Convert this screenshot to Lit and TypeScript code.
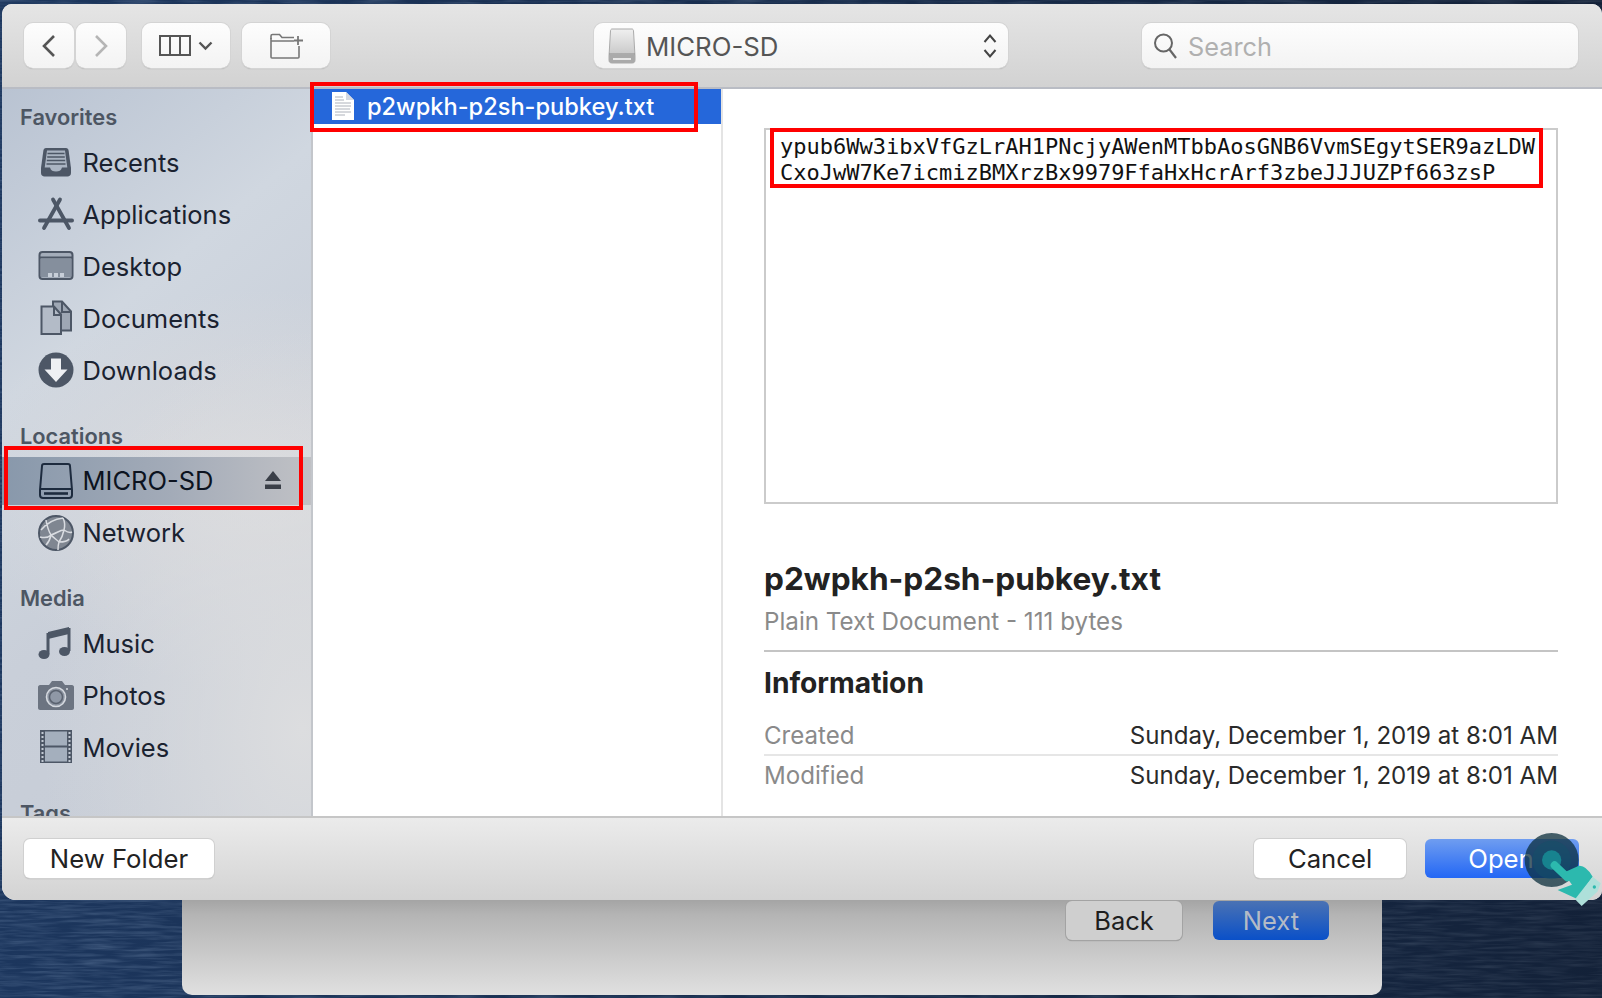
import { LitElement, html, css, svg } from "lit";
import { customElement } from "lit/decorators.js";

const c = "#4d5766";
const icons: Record<string, unknown> = {
  recents: svg`<path d="M8 4h20c1.500 0 2.400 1 2.600 2.400L33 24v5c0 2-1.500 3.500-3.500 3.500h-23C4.500 32.500 3 31 3 29v-5l2.400-17.600C5.600 5 6.500 4 8 4z" fill="${c}"/><path d="M9 6.500h18l2.300 17H24c-.8 3-3 4-6 4s-5.200-1-6-4H6.700z" fill="#aab4c2"/><path d="M9.500 9.500h17M9.200 13h17.600M8.800 16.500h18.400M8.500 20h19" stroke="${c}" stroke-width="1.700"/>`,
  apps: svg`<g stroke="${c}" stroke-linecap="round" fill="none"><path d="M22 3.500 6 32" stroke-width="3.800"/><path d="M15 3.500 31 32" stroke-width="3.800"/><path d="M2 24.500h32" stroke-width="4"/></g>`,
  desktop: svg`<rect x="1.500" y="4" width="33" height="27" rx="3" fill="#a4adba" stroke="${c}" stroke-width="2"/><path d="M2 9.500h32" stroke="${c}" stroke-width="2"/><path d="M3 10.500h30V29H3z" fill="#858f9d"/><path d="M10 25h4v4h-4zM16 25h4v4h-4zM22 25h4v4h-4z" fill="#c7ced8"/>`,
  docs: svg`<path d="M15 1.500h9l9 10v19H15z" fill="#9ea7b4" stroke="${c}" stroke-width="2"/><path d="M3.500 6.500H16l7 8v19.500H3.500z" fill="#b3bbc7" stroke="${c}" stroke-width="2"/><path d="M16 7v8h7M24 2v10h9" fill="none" stroke="${c}" stroke-width="2"/>`,
  down: svg`<circle cx="18" cy="18" r="17.500" fill="${c}"/><path d="M13 6.500h10v11h6.500L18 30 6.500 17.500H13z" fill="#eef0f3"/>`,
  sd: svg`<path d="M6 1h24c1 0 2 1 2 2l2 24v5c0 2-1 3-3 3H5c-2 0-3-1-3-3v-5L4 3c0-1 1-2 2-2z" fill="none" stroke="#1d2b3e" stroke-width="2"/><path d="M2 26h32" stroke="#1d2b3e" stroke-width="2"/><path d="M6 30.500h24" stroke="#1d2b3e" stroke-width="2.600"/>`,
  net: svg`<circle cx="18" cy="18" r="17" fill="#7f8691" stroke="${c}" stroke-width="2"/><g fill="none" stroke="#d9dce1" stroke-width="1.500"><path d="M3 15C9 8 15 4 25 3M8 5c1 6 2 10 5 15M13 20c6-2 9-5 13-5M26 15c1-4 1-8-1-12M26 15c3 2 6 3 8 2M13 20c-3 3-7 3-11 2M13 20c3 3 6 5 8 7M26 15c-1 5-3 9-5 12M21 27c3 0 8 0 10-3M21 27c-1 3-1 5-1 8M13 20c-1 5-3 8-5 10"/></g>`,
  music: svg`<path d="M10 7 31 2v7L10 14z" fill="${c}"/><path d="M10 8v21M31 3v23" stroke="${c}" stroke-width="3"/><ellipse cx="6" cy="29.500" rx="5.500" ry="4.500" fill="${c}"/><ellipse cx="26.500" cy="26.500" rx="5.500" ry="4.500" fill="${c}"/>`,
  photos: svg`<path d="M2 8h9l3-4h10l3 4h7c1 0 2 1 2 2v21c0 1-1 2-2 2H2c-1 0-2-1-2-2V10c0-1 1-2 2-2z" fill="#6c7481"/><circle cx="18" cy="20" r="9.500" fill="#8b93a0" stroke="#d5d9df" stroke-width="1.600"/><circle cx="18" cy="20" r="6.500" fill="#8f98a6" stroke="#5a626f" stroke-width="1.500"/><circle cx="29" cy="12" r="1" fill="#d5d9df"/>`,
  movies: svg`<rect x="2" y="1" width="32" height="33" fill="#4d5766"/><rect x="7" y="2.500" width="22" height="14" fill="#a4afbd"/><rect x="7" y="18.500" width="22" height="14" fill="#a4afbd"/><g fill="#c2c9d3">${[3, 7, 11, 15, 19, 23, 27, 31].map(
    (y) => svg`<rect x="3.500" y="${y}" width="2" height="2"/><rect x="30.500" y="${y}" width="2" height="2"/>`
  )}</g>`,
};

const sections = [
  { label: "Favorites", items: [["Recents", "recents"], ["Applications", "apps"], ["Desktop", "desktop"], ["Documents", "docs"], ["Downloads", "down"]] },
  { label: "Locations", items: [["MICRO-SD", "sd"], ["Network", "net"]] },
  { label: "Media", items: [["Music", "music"], ["Photos", "photos"], ["Movies", "movies"]] },
  { label: "Tags", items: [] },
];

@customElement("app-root")
export class AppRoot extends LitElement {
  static styles = css`
    :host {
      display: block;
      position: relative;
      width: 1602px;
      height: 998px;
      overflow: hidden;
      font-family: Inter, "Liberation Sans", sans-serif;
      background: #1c3050;
    }
    .water { position: absolute; inset: 0; width: 100%; height: 100%; }
    .sheet {
      position: absolute;
      left: 182px;
      top: 880px;
      width: 1200px;
      height: 115px;
      box-sizing: border-box;
      border-radius: 0 0 10px 10px;
      background: linear-gradient(#8f8f8f 0, #b4b4b4 30%, #e0e0e0 100%);
      display: flex;
      justify-content: flex-end;
      align-items: flex-start;
      gap: 31px;
      padding: 21px 53px 0 0;
    }
    .sheet button {
      height: 39px;
      border-radius: 6px;
      font: inherit;
      font-size: 25.500px;
      padding: 0;
      border: 0;
    }
    .back { width: 116px; background: #cfcfcf; color: #1e1e1e; box-shadow: 0 0 0 1px #a3a3a3, 0 1px 1px #888; }
    .next { width: 116px; height: 40px; background: linear-gradient(#4a72b4, #0a50c8); color: #b4bbc6; }
    .win {
      position: absolute;
      left: 2px;
      top: 4px;
      width: 1600px;
      height: 896px;
      border-radius: 10px 10px 10px 14px;
      overflow: hidden;
      display: flex;
      flex-direction: column;
      background: #fff;
    }
    .toolbar {
      height: 85px;
      box-sizing: border-box;
      flex: none;
      display: flex;
      align-items: flex-start;
      padding: 19px 22px 0;
      background: linear-gradient(#e5e5e5, #d2d2d2);
      border-bottom: 2px solid #b9bcc4;
    }
    .tb {
      height: 45px;
      box-sizing: border-box;
      background: linear-gradient(#fdfdfd, #f3f3f3);
      border-radius: 9px;
      box-shadow: 0 0 0 1px #d4d4d4, 0 1px 1px #9a9a9a;
      display: flex;
      align-items: center;
      justify-content: center;
      flex: none;
    }
    .nav { width: 50px; }
    .fwd { margin-left: 2px; }
    .view { width: 88px; margin-left: 16px; gap: 7px; }
    .folder { width: 88px; margin-left: 12px; }
    .popup {
      width: 414px;
      margin-left: 264px;
      justify-content: flex-start;
      padding: 0 11px 0 14px;
      gap: 10px;
      font-size: 25.800px;
      color: #555;
    }
    .popup .sp { flex: 1; }
    .tb span { padding-top: 2px; }
    .search {
      width: 436px;
      margin-left: 134px;
      justify-content: flex-start;
      padding: 0 0 0 11px;
      gap: 9px;
      font-size: 25.300px;
      color: #b0b0b0;
    }
    .body { flex: 1; min-height: 0; display: flex; }
    .side {
      width: 311px;
      flex: none;
      overflow: hidden;
      box-sizing: border-box;
      padding-top: 9px;
      border-right: 2px solid #c3c6cb;
      background:
        radial-gradient(ellipse 260px 400px at 300px 640px, #dcdddf 0, rgba(220, 221, 223, 0) 100%),
        radial-gradient(ellipse 300px 200px at 260px 400px, #dcdcde 0, rgba(220, 220, 222, 0) 100%),
        linear-gradient(140deg, #b9c3d2 0, #d0d7e0 32%, #c9cfd9 60%, #c6ccd6 100%);
    }
    .label {
      height: 38px;
      line-height: 38px;
      padding-left: 18px;
      font-size: 21.800px;
      font-weight: 600;
      color: #4d5663;
      margin-bottom: -2px;
      flex: none;
    }
    .sec { margin-bottom: 22.500px; display: flex; flex-direction: column; gap: 4px; }
    .row {
      height: 48px;
      flex: none;
      display: flex;
      align-items: center;
      font-size: 25.500px;
      color: #1a2230;
    }
    .icon { width: 36px; height: 36px; margin-left: 36px; margin-right: 8.500px; flex: none; }
    .row.sel { background: linear-gradient(90deg, #8898ab, #a3abb8 55%, #c0c1c5); color: #0c1320; position: relative; }
    .eject { position: absolute; right: 30px; top: 14px; width: 16px; height: 18px; }
    .list { width: 408px; flex: none; border-right: 2px solid #e4e4e4; box-sizing: content-box; }
    .file {
      height: 35px;
      box-sizing: border-box;
      display: flex;
      align-items: center;
      background: #2567da;
      color: #fff;
      font-size: 23.600px;
      font-weight: 500;
      padding: 0 0 1px 18px;
      gap: 12px;
    }
    .file svg { width: 24px; height: 30px; flex: none; }
    .prev { flex: 1; min-width: 0; padding: 39px 44px 0 41px; color: #222; }
    .box {
      height: 376px;
      box-sizing: border-box;
      border: 2px solid #cbcbcb;
      padding: 4px 14px;
      font-family: "DejaVu Sans Mono", monospace;
      font-size: 22px;
      line-height: 26px;
      color: #111;
      white-space: pre;
    }
    .title { margin-top: 55px; font-size: 31.600px; line-height: 40px; font-weight: 700; color: #222; }
    .kind { margin-top: 8px; font-size: 24.200px; line-height: 30px; color: #8a8a8a; padding-bottom: 13px; border-bottom: 2px solid #c4c4c4; }
    .info { margin-top: 13px; font-size: 28.200px; line-height: 36px; font-weight: 700; color: #222; }
    .kv { display: flex; justify-content: space-between; font-size: 24.100px; line-height: 38px; color: #2a2a2a; }
    .kv span:first-child { color: #8a8a8a; }
    .kv.a { margin-top: 16px; line-height: 37px; border-bottom: 2px solid #e6e6e6; padding-bottom: 0; margin-bottom: 1px; }
    .foot {
      height: 84px;
      flex: none;
      box-sizing: border-box;
      border-top: 2px solid #c6c6c6;
      background: linear-gradient(#ebebeb, #d3d3d3);
      display: flex;
      align-items: flex-start;
      padding: 21px 23px 0 22px;
    }
    .foot button {
      height: 39px;
      border: 0;
      border-radius: 6px;
      font: inherit;
      font-size: 25.700px;
      padding: 0;
      background: #fff;
      color: #222;
      box-shadow: 0 0 0 1px #d0d0d0, 0 1px 1px #999;
    }
    .nf { width: 190px; margin-right: auto; }
    .cancel { width: 152px; margin-right: 19px; }
    .foot .open { width: 154px; color: #fff; background: linear-gradient(#6f9df0, #2367f5); box-shadow: none; padding-right: 2px; }
    .red { position: absolute; box-sizing: border-box; border: 4px solid #f00; }
    .r1 { left: 310px; top: 82px; width: 388px; height: 50px; }
    .r2 { left: 770px; top: 128px; width: 773px; height: 60px; }
    .r3 { left: 4px; top: 446px; width: 299px; height: 64px; }
    .cur { position: absolute; left: 1510px; top: 820px; width: 92px; height: 90px; }
  `;

  private row(name: string, icon: string) {
    const sel = icon === "sd";
    return html`<div class="row ${sel ? "sel" : ""}">
      <svg class="icon" viewBox="0 0 36 36">${icons[icon]}</svg>${name}
      ${sel
        ? html`<svg class="eject" viewBox="0 0 16 18"><path d="M8 0l8 10H0z" fill="#3a3f48"/><rect x="0" y="13.500" width="16" height="4.500" fill="#3a3f48"/></svg>`
        : ""}
    </div>`;
  }

  render() {
    return html`
      <svg class="water" width="1602" height="998">
        <defs>
          <filter id="w" x="0" y="0" width="100%" height="100%">
            <feTurbulence type="fractalNoise" baseFrequency="0.025 0.35" numOctaves="3" seed="4"/>
            <feColorMatrix values="0 0 0 0 0.55  0 0 0 0 0.68  0 0 0 0 0.85  0.9 0 0 0 -0.32"/>
          </filter>
          <linearGradient id="dim" x1="0" y1="0" x2="1" y2="0">
            <stop offset="0" stop-color="#1c3a66" stop-opacity=".6"/>
            <stop offset="1" stop-color="#101c30" stop-opacity=".75"/>
          </linearGradient>
        </defs>
        <rect width="1602" height="998" filter="url(#w)"/>
        <rect width="1602" height="998" fill="url(#dim)"/>
      </svg>
      <div class="sheet">
        <button class="back">Back</button>
        <button class="next">Next</button>
      </div>
      <div class="win">
        <div class="toolbar">
          <div class="tb nav">
            <svg width="16" height="24" viewBox="0 0 16 24"><path d="M13 2 3 12l10 10" fill="none" stroke="#555" stroke-width="2.600"/></svg>
          </div>
          <div class="tb nav fwd">
            <svg width="16" height="24" viewBox="0 0 16 24"><path d="M3 2l10 10L3 22" fill="none" stroke="#b5b5b5" stroke-width="2.600"/></svg>
          </div>
          <div class="tb view">
            <svg width="32" height="21" viewBox="0 0 32 21"><rect x="1" y="1" width="30" height="19" fill="none" stroke="#555" stroke-width="2"/><path d="M11 1v19M21 1v19" stroke="#555" stroke-width="2"/></svg>
            <svg width="15" height="10" viewBox="0 0 15 10"><path d="M1.500 1.500 7.500 7.500l6-6" fill="none" stroke="#555" stroke-width="2.400"/></svg>
          </div>
          <div class="tb folder">
            <svg width="34" height="26" viewBox="0 0 34 26"><path d="M2 5V24a1 1 0 0 0 1 1h26a1 1 0 0 0 1-1V13" fill="none" stroke="#777" stroke-width="1.600"/><path d="M2 6V3c0-1 .5-1.500 1.500-1.500h7L13 4.500h12M2 8h23" fill="none" stroke="#777" stroke-width="1.600"/><path d="M29 3v9M25 7.500h9" stroke="#777" stroke-width="1.800"/></svg>
          </div>
          <div class="tb popup">
            <svg width="28" height="36" viewBox="0 0 28 36"><defs><linearGradient id="g" x1="0" y1="0" x2="0" y2="1"><stop offset="0" stop-color="#f0f0f0"/><stop offset="1" stop-color="#bcbcbc"/></linearGradient></defs><path d="M4 1h20c1 0 1.500 1 1.500 2L27 28v4c0 2-1 3-3 3H4c-2 0-3-1-3-3v-4L2.500 3c0-1 .5-2 1.500-2z" fill="url(#g)" stroke="#aaa"/><path d="M1 26h26" stroke="#8d8d8d" stroke-width="1"/><path d="M1 27h26v5c0 2-1 3-3 3H4c-2 0-3-1-3-3z" fill="#aaa"/><path d="M5 31h18" stroke="#e8e8e8" stroke-width="2"/></svg>
            <span>MICRO-SD</span><i class="sp"></i>
            <svg width="14" height="26" viewBox="0 0 14 26"><path d="M1.500 9 7 2.500 12.500 9M1.500 17 7 23.500 12.500 17" fill="none" stroke="#444" stroke-width="2"/></svg>
          </div>
          <div class="tb search">
            <svg width="26" height="28" viewBox="0 0 26 28"><circle cx="10.500" cy="11" r="8.500" fill="none" stroke="#666" stroke-width="2"/><path d="M16.500 17.500 23 26" stroke="#666" stroke-width="2.200"/></svg>
            <span>Search</span>
          </div>
        </div>
        <div class="body">
          <div class="side">
            ${sections.map(
              (s) => html`<div class="sec">
                <div class="label">${s.label}</div>
                ${s.items.map(([n, i]) => this.row(n, i))}
              </div>`
            )}
          </div>
          <div class="list">
            <div class="file">
              <svg viewBox="0 0 24 30"><path d="M1 1h14l8 8v20H1z" fill="#fff"/><path d="M15 1v8h8z" fill="#d5d9e2"/><path d="M4 6h8M4 9h9M4 12h16M4 15h16M4 18h15M4 21h16M4 24h10" stroke="#9aa0aa" stroke-width=".8"/></svg>
              <span>p2wpkh-p2sh-pubkey.txt</span>
            </div>
          </div>
          <div class="prev">
            <div class="box">ypub6Ww3ibxVfGzLrAH1PNcjyAWenMTbbAosGNB6VvmSEgytSER9azLDW
CxoJwW7Ke7icmizBMXrzBx9979FfaHxHcrArf3zbeJJJUZPf663zsP</div>
            <div class="title">p2wpkh-p2sh-pubkey.txt</div>
            <div class="kind">Plain Text Document - 111 bytes</div>
            <div class="info">Information</div>
            <div class="kv a"><span>Created</span><span>Sunday, December 1, 2019 at 8:01 AM</span></div>
            <div class="kv"><span>Modified</span><span>Sunday, December 1, 2019 at 8:01 AM</span></div>
          </div>
        </div>
        <div class="foot">
          <button class="nf">New Folder</button>
          <button class="cancel">Cancel</button>
          <button class="open">Open</button>
        </div>
      </div>
      <div class="red r1"></div>
      <div class="red r2"></div>
      <div class="red r3"></div>
      <svg class="cur" viewBox="0 0 276 270">
        <circle cx="125" cy="120" r="81" fill="#0c2f3c" fill-opacity=".75"/>
        <circle cx="125" cy="120" r="58" fill="#135067" fill-opacity=".5"/>
        <circle cx="125" cy="120" r="29" fill="#17838f"/>
        <path d="M134 136 172 172" stroke="#2cb9ae" stroke-width="24" stroke-linecap="round"/>
        <path d="M160 158 205 138Q226 134 248 170L200 236 143 210 186 194Z" fill="#2cb9ae"/>
        <path d="M248 170 272 190 262 215 215 258 195 238Z" fill="#aee0da"/>
        <circle cx="253" cy="201" r="5" fill="#2cb9ae"/>
      </svg>
    `;
  }
}
